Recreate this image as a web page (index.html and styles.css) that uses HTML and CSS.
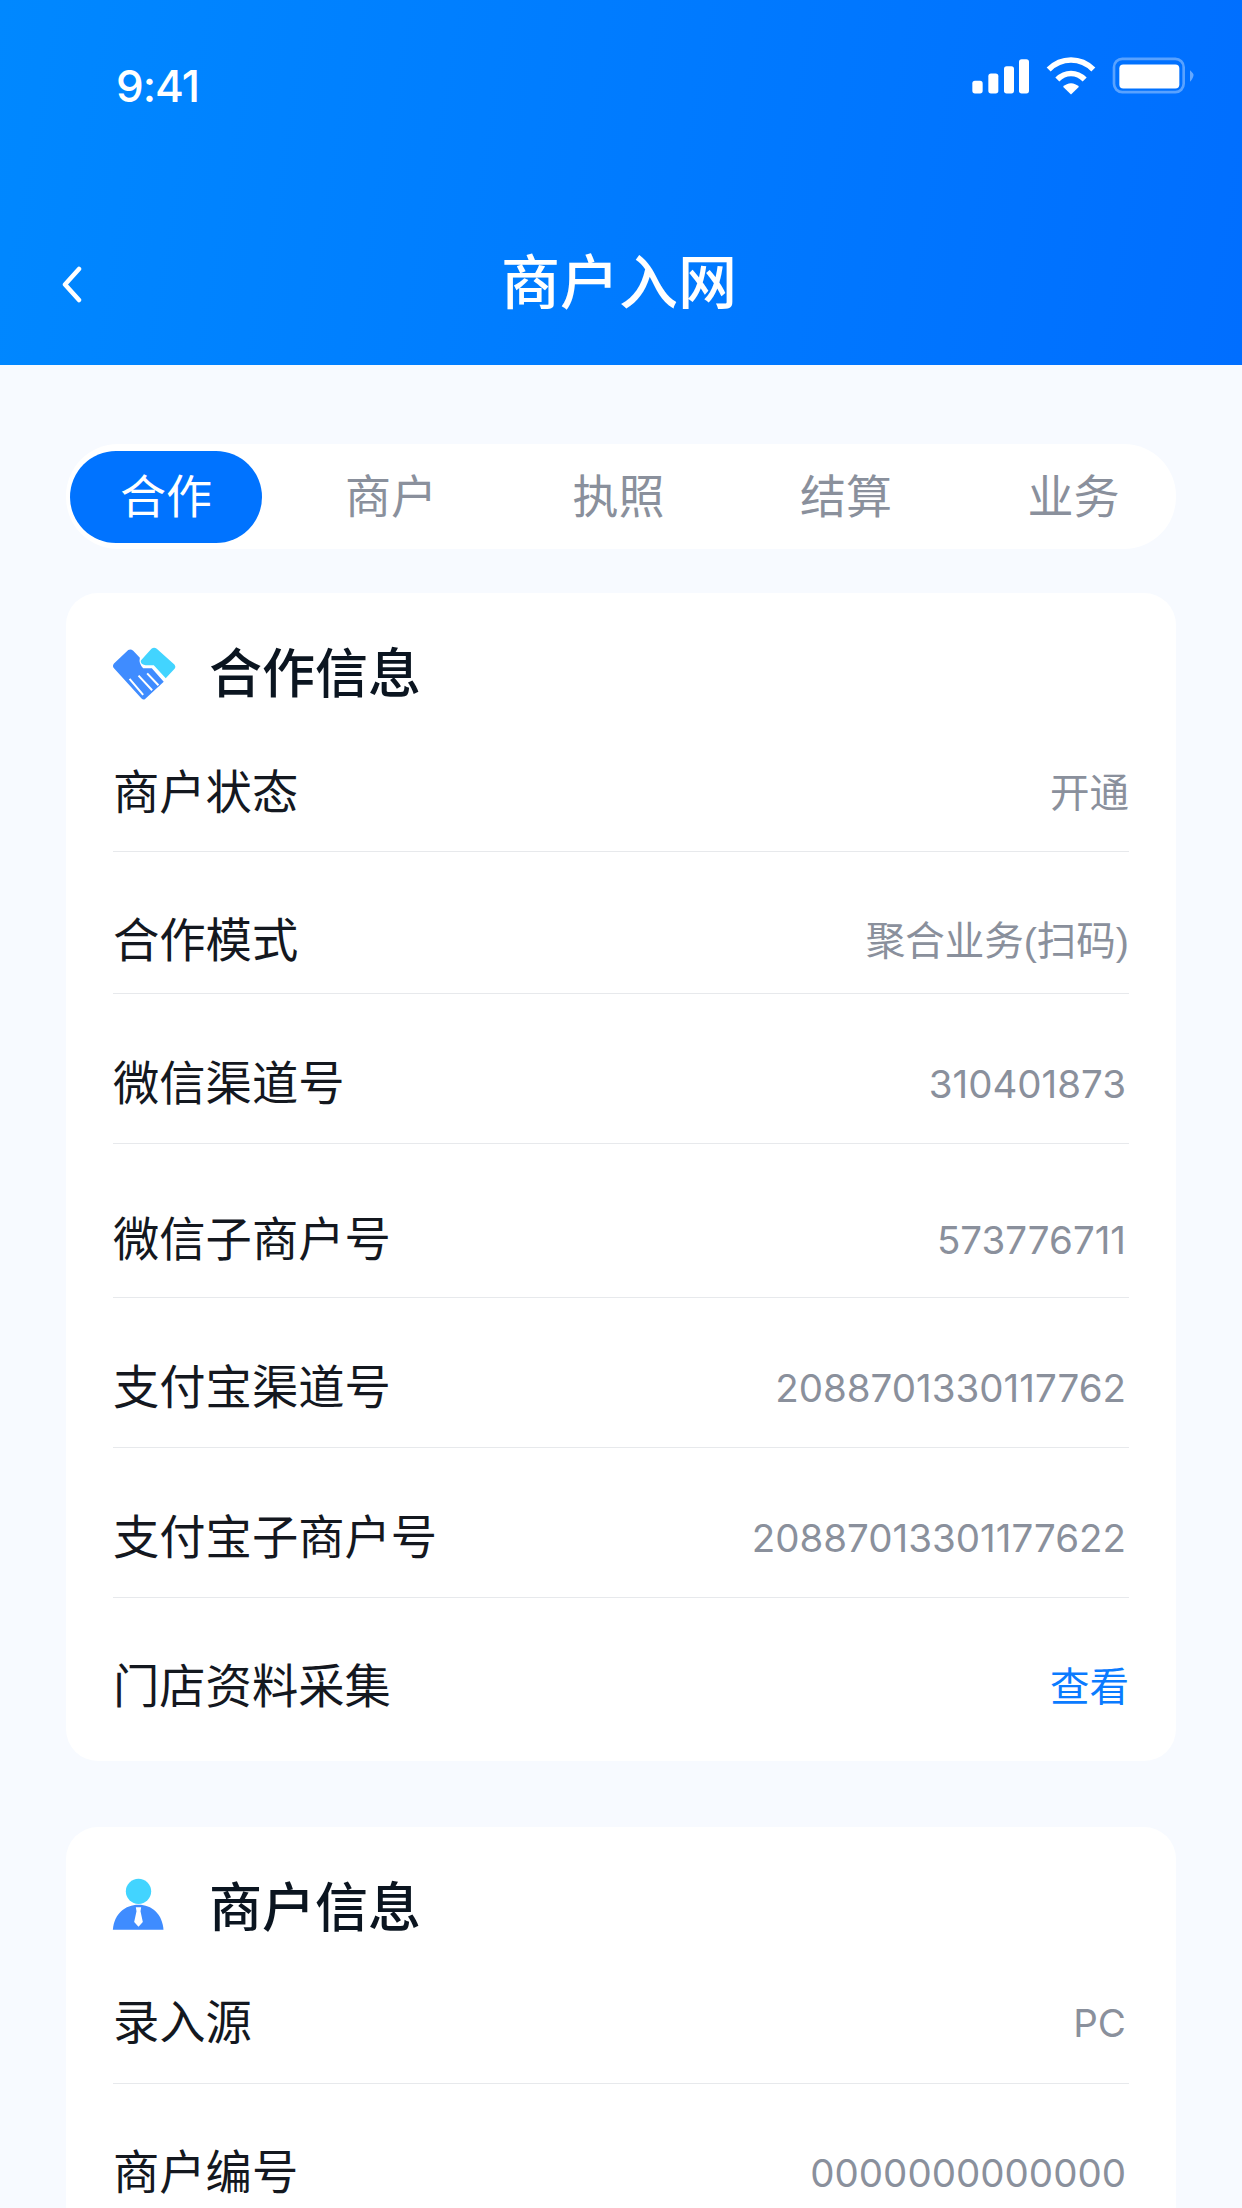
FILE: index.html
```html
<!DOCTYPE html>
<html lang="zh-CN">
<head>
  <meta charset="UTF-8" />
  <title>商户入网</title>
  <link rel="stylesheet" href="styles.css">
</head>
<body>
  <header class="top">
    <div class="status">
      <span class="time">9:41</span>
      <svg class="status-icons" viewBox="90 45 675 125">
        <rect x="97" y="122" width="31" height="38" rx="8" fill="#fff"/>
        <rect x="145" y="100" width="30" height="60" rx="8" fill="#fff"/>
        <rect x="192" y="78" width="30" height="82" rx="8" fill="#fff"/>
        <rect x="237" y="57" width="30" height="103" rx="8" fill="#fff"/>
        <path d="M326 88C364 50 422 50 460 88" fill="none" stroke="#fff" stroke-width="17"/>
        <path d="M352 118C376 94 410 94 434 118" fill="none" stroke="#fff" stroke-width="17"/>
        <path d="M369 140C383 126 403 126 417 140L393 163Z" fill="#fff"/>
        <rect x="522" y="56" width="209" height="100" rx="25" fill="none" stroke="#fff" stroke-opacity=".35" stroke-width="8"/>
        <rect x="538" y="73" width="180" height="72" rx="12" fill="#fff"/>
        <path d="M750 90C758 97 763 102 760 108C758 114 755 120 750 125Z" fill="#fff" fill-opacity=".4"/>
      </svg>
    </div>
    <div class="nav">
      <svg class="back" viewBox="0 0 20 37"><path d="M17 3L3 18.500L17 34" fill="none" stroke="#fff" stroke-width="4.500" stroke-linecap="round" stroke-linejoin="round"/></svg>
      <h1>商户入网</h1>
      <span></span>
    </div>
  </header>

  <main class="content">
    <div class="tabs">
      <span class="tab active">合作</span>
      <span class="tab">商户</span>
      <span class="tab">执照</span>
      <span class="tab">结算</span>
      <span class="tab">业务</span>
    </div>

    <section class="card">
      <div class="card-head">
        <svg class="card-icon" viewBox="60 80 205 171">
          <path d="M72 135L115 95Q122 90 130 97L150 118Q146 135 160 150L186 150L222 190L165 243Q160 246 155 241L72 150Q66 142 72 135Z" fill="#3f8cff"/>
          <path d="M119 182L160 230M146 172L187 216M172 165L206 201" stroke="#fff" stroke-width="6" fill="none"/>
          <path d="M153 126L185 91Q193 84 201 91L254 138Q260 145 254 152L228 180L192 141L167 141Q150 136 153 126Z" fill="#42d4ff"/>
        </svg>
        <h2>合作信息</h2>
      </div>
      <div class="row row-first"><span>商户状态</span><span class="val-cn">开通</span></div>
      <div class="row row-short"><span>合作模式</span><span class="val-cn">聚合业务(扫码)</span></div>
      <div class="row"><span>微信渠道号</span><span class="val">310401873</span></div>
      <div class="row row-tall"><span>微信子商户号</span><span class="val">573776711</span></div>
      <div class="row"><span>支付宝渠道号</span><span class="val">2088701330117762</span></div>
      <div class="row"><span>支付宝子商户号</span><span class="val">20887013301177622</span></div>
      <div class="row row-last"><span>门店资料采集</span><span class="val-cn link">查看</span></div>
    </section>

    <section class="card">
      <div class="card-head">
        <svg class="card-icon person" viewBox="60 55 170 165">
          <path d="M68 213C72 165 105 138 145 138C185 138 216 165 220 213Z" fill="#3f8cff"/>
          <path d="M137 146L153 146L151 158L158 190L145 204L132 190L139 158Z" fill="#fff"/>
          <circle cx="145" cy="98" r="38" fill="#42d4ff"/>
        </svg>
        <h2>商户信息</h2>
      </div>
      <div class="row row-second"><span>录入源</span><span class="val">PC</span></div>
      <div class="row row-last"><span>商户编号</span><span class="val">0000000000000</span></div>
    </section>
  </main>
</body>
</html>
```

FILE: styles.css
```css
html, body {
  height: 2208px;
  overflow: hidden;
}

body {
  margin: 0;
  background: #f7faff;
  font-family: "Liberation Sans", "Noto Sans CJK SC", sans-serif;
  color: #14181f;
}

.top {
  height: 365px;
  box-sizing: border-box;
  background: linear-gradient(100deg, #0088ff, #006eff);
  color: #fff;
}

.status {
  display: flex;
  justify-content: space-between;
  padding: 55px 47px 0 116px;
  height: 111px;
  box-sizing: border-box;
}

.time {
  font-family: Inter, sans-serif;
  font-size: 44px;
  font-weight: 500;
  line-height: 62px;
  letter-spacing: -1px;
}

.status-icons {
  width: 225px;
  height: 42px;
}

.nav {
  display: grid;
  grid-template-columns: 1fr auto 1fr;
  align-items: center;
  padding-left: 62px;
  margin-right: 66px;
  height: 100px;
  margin-top: 123px;
}

.nav h1 {
  margin: 0;
  font-size: 59px;
  font-weight: 500;
  line-height: 100px;
}

.back {
  width: 20px;
  height: 37px;
}

.content {
  padding: 79px 66px 0;
}

.tabs {
  display: flex;
  align-items: center;
  height: 105px;
  padding-left: 4px;
  background: #fff;
  border-radius: 52px;
  font-size: 46px;
  color: #8a909c;
}

.tab {
  margin-left: 135.500px;
  line-height: 92px;
}

.tab.active {
  width: 192px;
  margin-left: 0;
  text-align: center;
  background: #0073ff;
  border-radius: 46px;
  color: #fff;
}

.tab.active + .tab {
  margin-left: 83px;
}

.card {
  margin-top: 44px;
  padding: 40px 47px 0;
  background: #fff;
  border-radius: 32px;
}

.card + .card {
  margin-top: 66px;
}

.card-head {
  display: flex;
  align-items: center;
  height: 80px;
}

.card-head h2 {
  margin: 0;
  padding-bottom: 6px;
  font-size: 53px;
  font-weight: 500;
  color: #0b1520;
}

.card-icon {
  width: 68px;
  height: 57px;
  margin-left: -3px;
  margin-right: 31px;
}

.card-icon.person {
  width: 57px;
  height: 55px;
  margin-right: 42px;
  margin-bottom: 5px;
}

.row {
  display: flex;
  justify-content: space-between;
  align-items: center;
  padding: 60px 0 29px;
  border-bottom: 1px solid #e7e9ec;
  font-size: 46.300px;
  line-height: 60px;
}

.row-first { padding: 50px 0 28px; }
.row-second { padding: 46px 0 30px; }
.row-short { padding: 59px 0 22px; }
.row-tall { padding: 66px 0 27px; }

.row-last {
  padding: 59px 0 44px;
  border-bottom: none;
}

.val {
  padding-right: 3px;
  font-family: Inter, "Noto Sans CJK SC", sans-serif;
  font-size: 38.500px;
  color: #8a909c;
}

.val-cn {
  font-family: "Liberation Sans", "Noto Sans CJK SC", sans-serif;
  font-size: 39.500px;
  color: #8a909c;
}

.val-cn.link {
  color: #0a7bff;
}
```
